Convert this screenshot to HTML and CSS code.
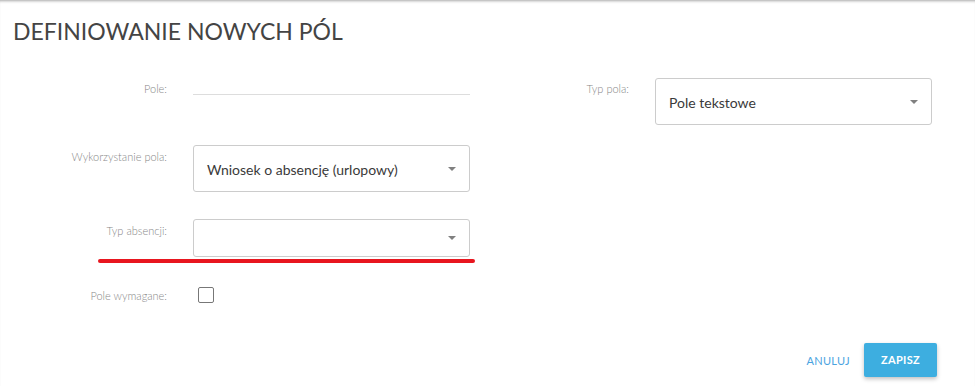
FILE: index.html
```html
<html>
<head>
<meta charset="utf-8">
<link rel="stylesheet" href="styles.css">
</head>
<body>

<div class="dialog">
    <h1 class="title">DEFINIOWANIE NOWYCH PÓL</h1>

    <div class="form">
        <!-- left column -->
        <div class="col col-left">
            <div class="row row-first">
                <label class="label">Pole:</label>
                <div class="field"><div class="line-input"></div></div>
            </div>
            <div class="row row-usage">
                <label class="label">Wykorzystanie pola:</label>
                <div class="field">
                    <div class="select select-tall">
                        <span class="select-text">Wniosek o absencję (urlopowy)</span>
                        <span class="caret"></span>
                    </div>
                </div>
            </div>
            <div class="row row-absence">
                <label class="label">Typ absencji:</label>
                <div class="field">
                    <div class="select select-short">
                        <span class="select-text"></span>
                        <span class="caret"></span>
                    </div>
                </div>
                <div class="mark"></div>
            </div>
            <div class="row row-required">
                <label class="label">Pole wymagane:</label>
                <div class="field"><span class="checkbox"></span></div>
            </div>
        </div>

        <!-- right column -->
        <div class="col col-right">
            <div class="row row-first">
                <label class="label">Typ pola:</label>
                <div class="field">
                    <div class="select select-tall">
                        <span class="select-text">Pole tekstowe</span>
                        <span class="caret"></span>
                    </div>
                </div>
            </div>
        </div>
    </div>

    <div class="actions">
        <a class="btn-link" href="#">ANULUJ</a>
        <a class="btn-primary" href="#">ZAPISZ</a>
    </div>
</div>

</body>
</html>
```

FILE: styles.css
```css
body {
    margin: 0;
    background: #fff;
    font-family: Lato, "Open Sans", sans-serif;
    color: #333;
}

.dialog {
    height: 386px;
    box-sizing: border-box;
    padding-top: 15px;
    box-shadow: inset 0 3px 3px -2px rgba(0, 0, 0, 0.35);
    display: flex;
    flex-direction: column;
}

.title {
    margin: 0 0 0 13px;
    font-size: 23px;
    line-height: 32px;
    font-weight: 400;
    color: #444;
}

.form {
    display: grid;
    grid-template-columns: 470px 1fr;
    margin-top: 31px;
}

.row {
    display: grid;
    grid-template-columns: 167px 277px;
    column-gap: 26px;
    align-items: start;
    position: relative;
}

.col-right .row {
    grid-template-columns: 159px 277px;
}

.label {
    text-align: right;
    font-size: 11px;
    font-weight: 300;
    color: #888;
    padding-top: 4px;
    line-height: 13px;
}

.row-usage { margin-top: 50px; }
.row-absence { margin-top: 27px; }
.row-required { margin-top: 30px; }

.row-usage .label,
.row-absence .label { padding-top: 5px; }

.row-required .label { padding-top: 2px; }

.line-input {
    height: 16px;
    border-bottom: 1px solid #ddd;
}

.select {
    box-sizing: border-box;
    border: 1px solid #ccc;
    border-radius: 3px;
    display: flex;
    align-items: center;
    padding: 0 13px;
}

.select-tall { height: 47px; }
.select-short { height: 38px; }

.select-text {
    flex: 1;
    font-size: 14px;
    color: #3a3a3a;
    padding-top: 1px;
}

.caret {
    width: 0;
    height: 0;
    border-left: 4px solid transparent;
    border-right: 4px solid transparent;
    border-top: 4px solid #808080;
}

.mark {
    position: absolute;
    left: 98px;
    top: 40px;
    width: 377px;
    height: 4px;
    border-radius: 2px;
    background: #e8161f;
}

.checkbox {
    display: block;
    margin-left: 5px;
    width: 16px;
    height: 16px;
    box-sizing: border-box;
    border: 1px solid #777;
    border-radius: 2px;
}

.actions {
    margin-top: auto;
    margin-bottom: 9px;
    display: flex;
    justify-content: flex-end;
    align-items: center;
    gap: 14px;
    padding-right: 38px;
}

.btn-link {
    text-decoration: none;
    color: #4aa3df;
    font-size: 11px;
    letter-spacing: 0.3px;
}

.btn-primary {
    text-decoration: none;
    color: #fff;
    background: #3daee0;
    font-size: 11px;
    font-weight: 700;
    letter-spacing: 0.3px;
    width: 73px;
    height: 34px;
    line-height: 34px;
    text-align: center;
    border-radius: 2px;
    box-shadow: 0 2px 4px rgba(0, 0, 0, 0.25);
}
```
